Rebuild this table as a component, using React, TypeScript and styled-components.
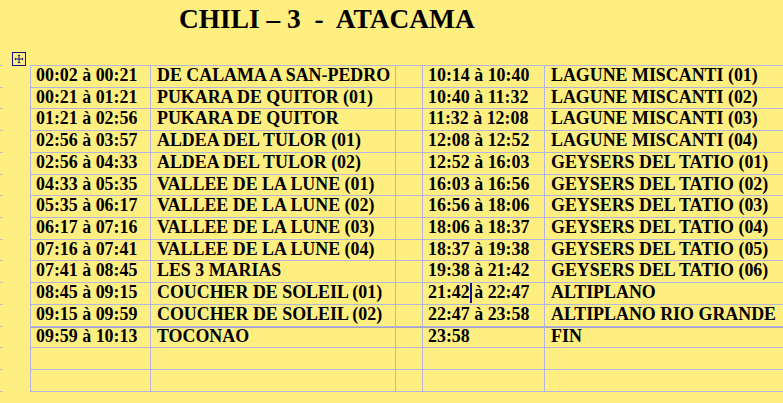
import React from "react";
import styled, { createGlobalStyle } from "styled-components";

const YELLOW = "#FFEF80";
const LINE = "#B2B4E2";

const Global = createGlobalStyle`
  html, body { margin: 0; padding: 0; background: ${YELLOW}; }
  body { width: 783px; height: 403px; overflow: hidden; }
`;

const Page = styled.div`
  width: 783px;
  height: 403px;
  overflow: hidden;
  background: ${YELLOW};
  font-family: "Liberation Serif", "Times New Roman", serif;
  color: #000;
  display: flex;
  flex-direction: column;
`;

const Title = styled.h1`
  margin: 0;
  box-sizing: border-box;
  height: 52px;
  padding: 5.5px 0 0 179px;
  font-size: 27.4px;
  line-height: 27px;
  font-weight: bold;
  white-space: pre;
`;

const HandleRow = styled.div`
  padding-left: 12px;
  height: 13px;
`;

const Handle = styled.div`
  width: 14px;
  height: 14px;
  box-sizing: border-box;
  border: 1px solid #10108a;
  display: flex;
  align-items: center;
  justify-content: center;
`;

const TableRow = styled.div`
  display: flex;
  align-items: flex-start;
`;

const Ticks = styled.div`
  flex: 0 0 3px;
  width: 3px;
  margin-right: 27px;
  display: flex;
  flex-direction: column;
  gap: 20.73px;
`;

const Tick = styled.div`
  height: 1px;
  background: #c4c4c4;
`;

const Grid = styled.div`
  display: grid;
  grid-template-columns: 119px 244px 26px 121px 260px;
  grid-auto-rows: 20.73px;
  gap: 1px;
  background: ${LINE};
  border: 1px solid ${LINE};
  border-right: none;
  flex-shrink: 0;
`;

const Cell = styled.div<{ $sep?: boolean; $pad: number }>`
  background: ${YELLOW};
  padding-left: ${(p) => p.$pad}px;
  font-size: 17.9px;
  line-height: 19px;
  font-weight: bold;
  white-space: nowrap;
  overflow: hidden;
  box-shadow: ${(p) => (p.$sep ? "inset 0 1px 0 #A4A4BC" : "none")};
`;

const Caret = styled.span`
  display: inline-block;
  width: 0;
  height: 20px;
  border-left: 2px solid #101080;
  margin-right: -2px;
  vertical-align: -5px;
`;

type Row = { t1: string; n1: string; t2: string; n2: string; caret?: boolean };

const rows: Row[] = [
  { t1: "00:02 à 00:21", n1: "DE CALAMA A SAN-PEDRO", t2: "10:14 à 10:40", n2: "LAGUNE MISCANTI (01)" },
  { t1: "00:21 à 01:21", n1: "PUKARA DE QUITOR (01)", t2: "10:40 à 11:32", n2: "LAGUNE MISCANTI (02)" },
  { t1: "01:21 à 02:56", n1: "PUKARA DE QUITOR", t2: "11:32 à 12:08", n2: "LAGUNE MISCANTI (03)" },
  { t1: "02:56 à 03:57", n1: "ALDEA DEL TULOR (01)", t2: "12:08 à 12:52", n2: "LAGUNE MISCANTI (04)" },
  { t1: "02:56 à 04:33", n1: "ALDEA DEL TULOR (02)", t2: "12:52 à 16:03", n2: "GEYSERS DEL TATIO (01)" },
  { t1: "04:33 à 05:35", n1: "VALLEE DE LA LUNE (01)", t2: "16:03 à 16:56", n2: "GEYSERS DEL TATIO (02)" },
  { t1: "05:35 à 06:17", n1: "VALLEE DE LA LUNE (02)", t2: "16:56 à 18:06", n2: "GEYSERS DEL TATIO (03)" },
  { t1: "06:17 à 07:16", n1: "VALLEE DE LA LUNE (03)", t2: "18:06 à 18:37", n2: "GEYSERS DEL TATIO (04)" },
  { t1: "07:16 à 07:41", n1: "VALLEE DE LA LUNE (04)", t2: "18:37 à 19:38", n2: "GEYSERS DEL TATIO (05)" },
  { t1: "07:41 à 08:45", n1: "LES 3 MARIAS", t2: "19:38 à 21:42", n2: "GEYSERS DEL TATIO (06)" },
  { t1: "08:45 à 09:15", n1: "COUCHER DE SOLEIL (01)", t2: "21:42 à 22:47", n2: "ALTIPLANO", caret: true },
  { t1: "09:15 à 09:59", n1: "COUCHER DE SOLEIL (02)", t2: "22:47 à 23:58", n2: "ALTIPLANO RIO GRANDE" },
  { t1: "09:59 à 10:13", n1: "TOCONAO", t2: "23:58", n2: "FIN" },
  { t1: "", n1: "", t2: "", n2: "" },
  { t1: "", n1: "", t2: "", n2: "" },
];

const MoveIcon = () => (
  <svg width="10" height="10" viewBox="0 0 10 10" fill="none">
    <path d="M5 1v8M1 5h8" stroke="#10108a" strokeWidth="1" />
    <path d="M5 0.5L3.5 2h3z M5 9.5L3.5 8h3z M0.5 5L2 3.5v3z M9.5 5L8 3.5v3z" fill="#10108a" />
  </svg>
);

export default function App() {
  return (
    <Page>
      <Global />
      <Title>{"CHILI – 3  -  ATACAMA"}</Title>
      <HandleRow>
        <Handle>
          <MoveIcon />
        </Handle>
      </HandleRow>
      <TableRow>
        <Ticks>
          {Array.from({ length: 16 }).map((_, i) => (
            <Tick key={i} />
          ))}
        </Ticks>
        <Grid>
          {rows.map((r, i) => {
            const sep = i === 12;
            return (
              <React.Fragment key={i}>
                <Cell $sep={sep} $pad={5}>{r.t1}</Cell>
                <Cell $sep={sep} $pad={6}>{r.n1}</Cell>
                <Cell $sep={sep} $pad={0} />
                <Cell $sep={sep} $pad={5}>
                  {r.caret ? (
                    <>
                      {r.t2.slice(0, 5)}
                      <Caret />
                      {r.t2.slice(5)}
                    </>
                  ) : (
                    r.t2
                  )}
                </Cell>
                <Cell $sep={sep} $pad={6}>{r.n2}</Cell>
              </React.Fragment>
            );
          })}
        </Grid>
      </TableRow>
    </Page>
  );
}
